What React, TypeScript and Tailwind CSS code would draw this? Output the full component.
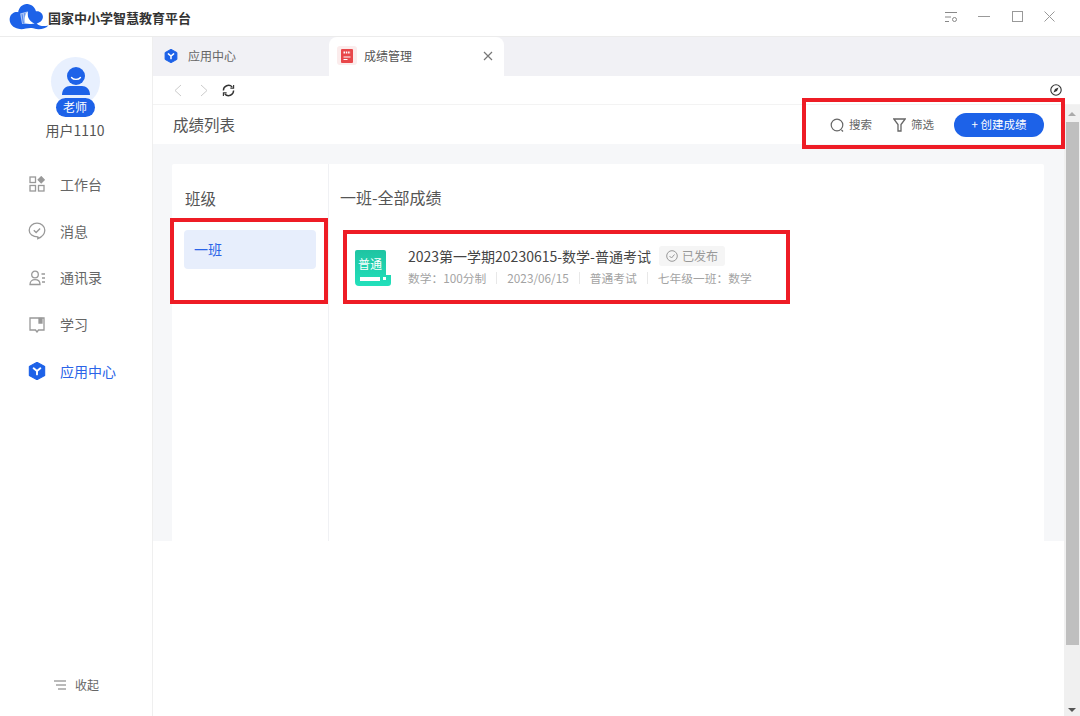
import type { ReactNode } from 'react';

function HexIcon({ size = 16 }: { size?: number }) {
    return (
        <svg width={size} height={size} viewBox="0 0 16 16">
            <path d="M8 0.3 14.8 4.1V11.9L8 15.7 1.2 11.9V4.1Z" fill="#1d62e8" stroke="#1d62e8" strokeLinejoin="round" />
            <path d="M5 5.6 8 8l3-2.4M8 8v3" fill="none" stroke="#fff" strokeWidth="1.7" strokeLinecap="round" />
        </svg>
    );
}

function Logo() {
    return (
        <svg width="40" height="28" viewBox="27 8 120 85" className="mb-[3px]">
            <path
                d="M55 86C37 84 25 68 29 52 32 40 44 34 54 36 57 20 70 8 86 12 99 15 106 24 108 33 121 31 131 41 129 53 127 63 118 69 110 70 120 79 132 79 146 76 135 87 118 91 100 85 85 80 70 91 55 86Z"
                fill="#1d62e8"
            />
            <path d="M60 40 82 34 86 70 66 72Z" fill="#a9c4f6" />
            <path d="M66 42 70 70M74 39 77 70" stroke="#1d62e8" strokeWidth="2" />
            <path d="M84 33C80 48 86 62 104 71 92 72 82 71 76 70 72 56 74 42 84 33Z" fill="#fff" />
        </svg>
    );
}

function NavItem({ icon, label, active = false }: { icon: ReactNode; label: string; active?: boolean }) {
    return (
        <div className="flex h-[46.75px] items-center pl-[28px]">
            <span className="flex w-[18px] justify-center">{icon}</span>
            <span className={`ml-[14px] text-[14px] ${active ? 'text-[#2a64e8]' : 'text-[#666]'}`}>{label}</span>
        </div>
    );
}

const grayStroke = { fill: 'none', stroke: '#999', strokeWidth: 1.3 };

function MetaDivider() {
    return <span className="mx-[10px] h-[12px] w-px bg-[#e8e8e8]" />;
}

export default function App() {
    return (
        <div className="relative flex h-[716px] w-[1080px] flex-col overflow-hidden bg-white font-['Noto_Sans_CJK_SC',sans-serif]">
            {/* title bar */}
            <div className="flex h-[37px] shrink-0 items-center border-b border-[#ececec] pl-[9px]">
                <Logo />
                <span className="ml-[-1px] text-[13px] font-bold text-[#333]">国家中小学智慧教育平台</span>
                <div className="ml-auto flex items-center pb-[3px] pr-[25px]">
                    <svg width="14" height="14" viewBox="0 0 14 14" fill="none" stroke="#888" strokeWidth="1">
                        <path d="M1 2.500h12M1 7h6M1 11.500h4" />
                        <circle cx="10.500" cy="9.500" r="2" />
                    </svg>
                    <svg width="12" height="12" viewBox="0 0 12 12" stroke="#999" strokeWidth="1" className="ml-[20px]">
                        <path d="M0 5.500h12" />
                    </svg>
                    <svg width="11" height="11" viewBox="0 0 11 11" fill="none" stroke="#999" strokeWidth="1" className="ml-[22px]">
                        <rect x="0.500" y="0.500" width="10" height="10" />
                    </svg>
                    <svg width="11" height="11" viewBox="0 0 11 11" stroke="#999" strokeWidth="1" className="ml-[21px]">
                        <path d="M0.500 0.500l10 10M10.500 0.500l-10 10" />
                    </svg>
                </div>
            </div>

            <div className="flex min-h-0 flex-1">
                {/* sidebar */}
                <aside className="flex w-[153px] shrink-0 flex-col border-r border-[#efefef]">
                    <div className="flex flex-col items-center pr-[2px] pt-[20px]">
                        <div className="relative h-[49px] w-[49px] rounded-full bg-[#e8f0fe]">
                            <svg width="49" height="49" viewBox="0 0 49 49" className="absolute left-0 top-0">
                                <circle cx="25" cy="19" r="9" fill="#1d62e8" />
                                <path d="M20.500 20.500c2 2.600 7 2.600 9 0" fill="none" stroke="#fff" strokeWidth="1.300" strokeLinecap="round" />
                                <path d="M11 38c0-6 4-9 8-9h12c4 0 8 3 8 9z" fill="#1d62e8" />
                            </svg>
                            <span className="absolute left-[5px] top-[41px] flex h-[19px] w-[39px] items-center justify-center rounded-full bg-[#1d62e8] pb-[1px] text-[12px] text-white">
                                老师
                            </span>
                        </div>
                        <span className="mt-[14px] text-[14px] leading-[20px] text-[#555]">用户1110</span>
                    </div>
                    <nav className="mt-[21px] flex flex-col">
                        <NavItem
                            label="工作台"
                            icon={
                                <svg width="16" height="16" viewBox="0 0 16 16" {...grayStroke}>
                                    <rect x="1" y="1" width="5.500" height="5.500" />
                                    <rect x="1" y="9.500" width="5.500" height="5.500" />
                                    <rect x="9.500" y="9.500" width="5.500" height="5.500" />
                                    <path d="M12.200 0.800l3 3-3 3-3-3z" fill="#999" />
                                </svg>
                            }
                        />
                        <NavItem
                            label="消息"
                            icon={
                                <svg width="18" height="18" viewBox="0 0 18 18" {...grayStroke}>
                                    <path d="M9 1.200c4.300 0 7.800 3 7.800 7 0 4.200-3.500 7-7 8.500v-1.800C4.800 14.900 1.200 12.200 1.200 8.200c0-4 3.500-7 7.800-7Z" />
                                    <path d="M5.800 8.300l2.300 2.200 4-4" strokeWidth="1.400" />
                                </svg>
                            }
                        />
                        <NavItem
                            label="通讯录"
                            icon={
                                <svg width="17" height="16" viewBox="0 0 17 16" {...grayStroke}>
                                    <circle cx="6" cy="4.500" r="3.300" />
                                    <path d="M1 14.500c0-3 2.200-4.800 5-4.800s5 1.800 5 4.800z" />
                                    <path d="M12.500 4h3.500M13 8h3M13 12h3" />
                                </svg>
                            }
                        />
                        <NavItem
                            label="学习"
                            icon={
                                <svg width="16" height="16" viewBox="0 0 16 16" {...grayStroke}>
                                    <path d="M1 1h14v12H9.500L8 15l-1.500-2H1z" />
                                    <path d="M10 1.500h3V6h-3z" fill="#999" />
                                </svg>
                            }
                        />
                        <NavItem label="应用中心" active icon={<HexIcon size={18} />} />
                    </nav>
                    <div className="mt-auto flex items-center justify-center pb-[22px] pl-[1px]">
                        <svg width="12" height="10" viewBox="0 0 12 10" stroke="#777" strokeWidth="1.200">
                            <path d="M0 1h12M2 5h10M4 9h8" />
                        </svg>
                        <span className="ml-[9px] text-[12px] text-[#666]">收起</span>
                    </div>
                </aside>

                {/* main */}
                <div className="flex min-w-0 flex-1 flex-col">
                    <div className="flex h-[39px] shrink-0 bg-[#f1f1f5]">
                        <div className="flex w-[176px] items-center pb-[2px] pl-[11px]">
                            <HexIcon size={14} />
                            <span className="ml-[10px] text-[12px] text-[#666]">应用中心</span>
                        </div>
                        <div className="flex w-[175px] items-center rounded-t-[8px] bg-white pb-[2px] pl-[8px] pr-[11px]">
                            <span className="flex h-[19px] w-[20px] items-center justify-center rounded-[3px] bg-[#fbecec]">
                                <svg width="12" height="14" viewBox="0 0 12 14">
                                    <rect width="12" height="14" rx="1" fill="#e8474a" />
                                    <path d="M2.500 3.500h7" stroke="#fff" strokeWidth="2" strokeDasharray="1.500 0.800" />
                                    <path d="M2.500 8h7M2.500 10.500h4" stroke="#fff" strokeWidth="1" />
                                </svg>
                            </span>
                            <span className="ml-[7px] text-[12px] text-[#555]">成绩管理</span>
                            <svg width="10" height="10" viewBox="0 0 10 10" stroke="#777" strokeWidth="1.200" className="ml-auto">
                                <path d="M1 1l8 8M9 1l-8 8" />
                            </svg>
                        </div>
                    </div>

                    {/* toolbar */}
                    <div className="flex h-[29px] shrink-0 items-center border-b border-[#f3f3f3] pl-[21px] pr-[18px]">
                        <svg width="8" height="13" viewBox="0 0 8 13" fill="none" stroke="#ccc" strokeWidth="1">
                            <path d="M7 1 1 6.500l6 5.500" />
                        </svg>
                        <svg width="8" height="13" viewBox="0 0 8 13" fill="none" stroke="#ccc" strokeWidth="1" className="ml-[18px]">
                            <path d="M1 1l6 5.500-6 5.500" />
                        </svg>
                        <svg width="13" height="13" viewBox="0 0 14 14" fill="none" stroke="#333" strokeWidth="1.500" className="ml-[14px]">
                            <path d="M1.500 7A5.500 5.500 0 0 1 11 3.200M12.500 7A5.500 5.500 0 0 1 3 10.800" />
                            <path d="M12.500 1v3.500H9M1.500 13V9.500H5" strokeWidth="1.200" />
                        </svg>
                        <svg width="12" height="12" viewBox="0 0 12 12" fill="none" className="ml-auto">
                            <circle cx="6" cy="6" r="5.200" stroke="#333" strokeWidth="1.100" />
                            <path d="M8.500 3.500 7 7 3.500 8.500 5 5z" fill="#333" />
                        </svg>
                    </div>

                    <div className="flex min-h-0 flex-1">
                        <div className="flex min-w-0 flex-1 flex-col">
                            {/* page header */}
                            <div className="flex h-[39px] shrink-0 items-center px-[20px]">
                                <span className="text-[15.500px] text-[#555]">成绩列表</span>
                                <div className="ml-auto flex items-center pt-[1px]">
                                    <svg width="15" height="15" viewBox="0 0 15 15" fill="none" stroke="#666" strokeWidth="1.200">
                                        <circle cx="7" cy="7" r="5.800" />
                                        <path d="M11.500 12l1.500 1.500" />
                                    </svg>
                                    <span className="ml-[4px] text-[11.500px] text-[#666]">搜索</span>
                                    <svg width="13" height="14" viewBox="0 0 13 14" fill="none" stroke="#666" strokeWidth="1.300" className="ml-[21px]">
                                        <path d="M0.800 1h11.400L8 6.500V13H5V6.500z" />
                                    </svg>
                                    <span className="ml-[5px] text-[11.500px] text-[#666]">筛选</span>
                                    <span className="ml-[20px] flex h-[24px] w-[90px] items-center justify-center rounded-full bg-[#1d62e8] text-[11.500px] text-white">
                                        + 创建成绩
                                    </span>
                                </div>
                            </div>
                            {/* content */}
                            <div className="flex h-[397px] shrink-0 bg-[#f6f7f9] pl-[19px] pr-[20px] pt-[20px]">
                                <div className="flex flex-1 rounded-t-[2px] bg-white">
                                    <div className="w-[157px] shrink-0 border-r border-[#f0f1f4] px-[12px] pt-[23px]">
                                        <div className="pl-[1px] text-[15.500px] leading-[22px] text-[#555]">班级</div>
                                        <div className="mt-[21px] flex h-[39px] items-center rounded-[4px] bg-[#e7eefc] pl-[10px] text-[14px] text-[#2a64e8]">
                                            一班
                                        </div>
                                    </div>
                                    <div className="min-w-0 flex-1 pl-[11px] pt-[22px]">
                                        <div className="text-[16px] leading-[22px] text-[#555]">一班-全部成绩</div>
                                        <div className="mt-[42px] flex items-start pl-[15px]">
                                            <svg width="36" height="36" viewBox="0 0 36 36" className="shrink-0">
                                                <defs>
                                                    <linearGradient id="examFill" x1="0" y1="0" x2="0" y2="1">
                                                        <stop offset="0" stopColor="#1fc4a2" />
                                                        <stop offset="1" stopColor="#22e0bb" />
                                                    </linearGradient>
                                                </defs>
                                                <path d="M2 0h27a2 2 0 0 1 2 2v23h5v8a3 3 0 0 1-3 3H4a4 4 0 0 1-4-4V2a2 2 0 0 1 2-2Z" fill="url(#examFill)" />
                                                <rect x="5" y="27" width="20" height="4" fill="#fff" />
                                                <rect x="28" y="27" width="3" height="3" fill="#fff" />
                                                <text x="3" y="19" fontSize="12" fill="#fff" fontFamily="'Noto Sans CJK SC', sans-serif">
                                                    普通
                                                </text>
                                            </svg>
                                            <div className="ml-[17px] mt-[-5px]">
                                                <div className="flex items-center">
                                                    <span className="text-[14px] leading-[22px] text-[#444]">2023第一学期20230615-数学-普通考试</span>
                                                    <span className="ml-[8px] flex h-[20px] items-center rounded-[3px] bg-[#f5f5f5] px-[7px] text-[12px] text-[#999]">
                                                        <svg width="12" height="12" viewBox="0 0 12 12" fill="none" stroke="#999" strokeWidth="1" className="mr-[4px]">
                                                            <circle cx="6" cy="6" r="5.300" />
                                                            <path d="M3.500 6l2 2 3-3.500" />
                                                        </svg>
                                                        已发布
                                                    </span>
                                                </div>
                                                <div className="mt-[2px] flex items-center text-[11.750px] leading-[18px] text-[#a3a3a3]">
                                                    <span>数学：100分制</span>
                                                    <MetaDivider />
                                                    <span>2023/06/15</span>
                                                    <MetaDivider />
                                                    <span>普通考试</span>
                                                    <MetaDivider />
                                                    <span>七年级一班：数学</span>
                                                </div>
                                            </div>
                                        </div>
                                    </div>
                                </div>
                            </div>
                        </div>

                        {/* right scrollbar */}
                        <div className="flex w-[16px] shrink-0 flex-col items-center bg-[#f0f0f0]">
                            <span className="mt-[7px] h-0 w-0 border-x-[4px] border-b-[4px] border-x-transparent border-b-[#aaa]" />
                            <div className="mt-[6px] h-[523px] w-[13px] bg-[#bfbfbf]" />
                            <span className="mb-[4px] mt-auto h-0 w-0 border-x-[4px] border-t-[4px] border-x-transparent border-t-[#555]" />
                        </div>
                    </div>
                </div>
            </div>

            {/* annotation boxes */}
            <div className="absolute left-[802px] top-[98px] h-[51px] w-[263px] border-[4px] border-[#ee1c25]" />
            <div className="absolute left-[170px] top-[218px] h-[86px] w-[158px] border-[4px] border-[#ee1c25]" />
            <div className="absolute left-[343px] top-[230px] h-[74px] w-[447px] border-[4px] border-[#ee1c25]" />
        </div>
    );
}
